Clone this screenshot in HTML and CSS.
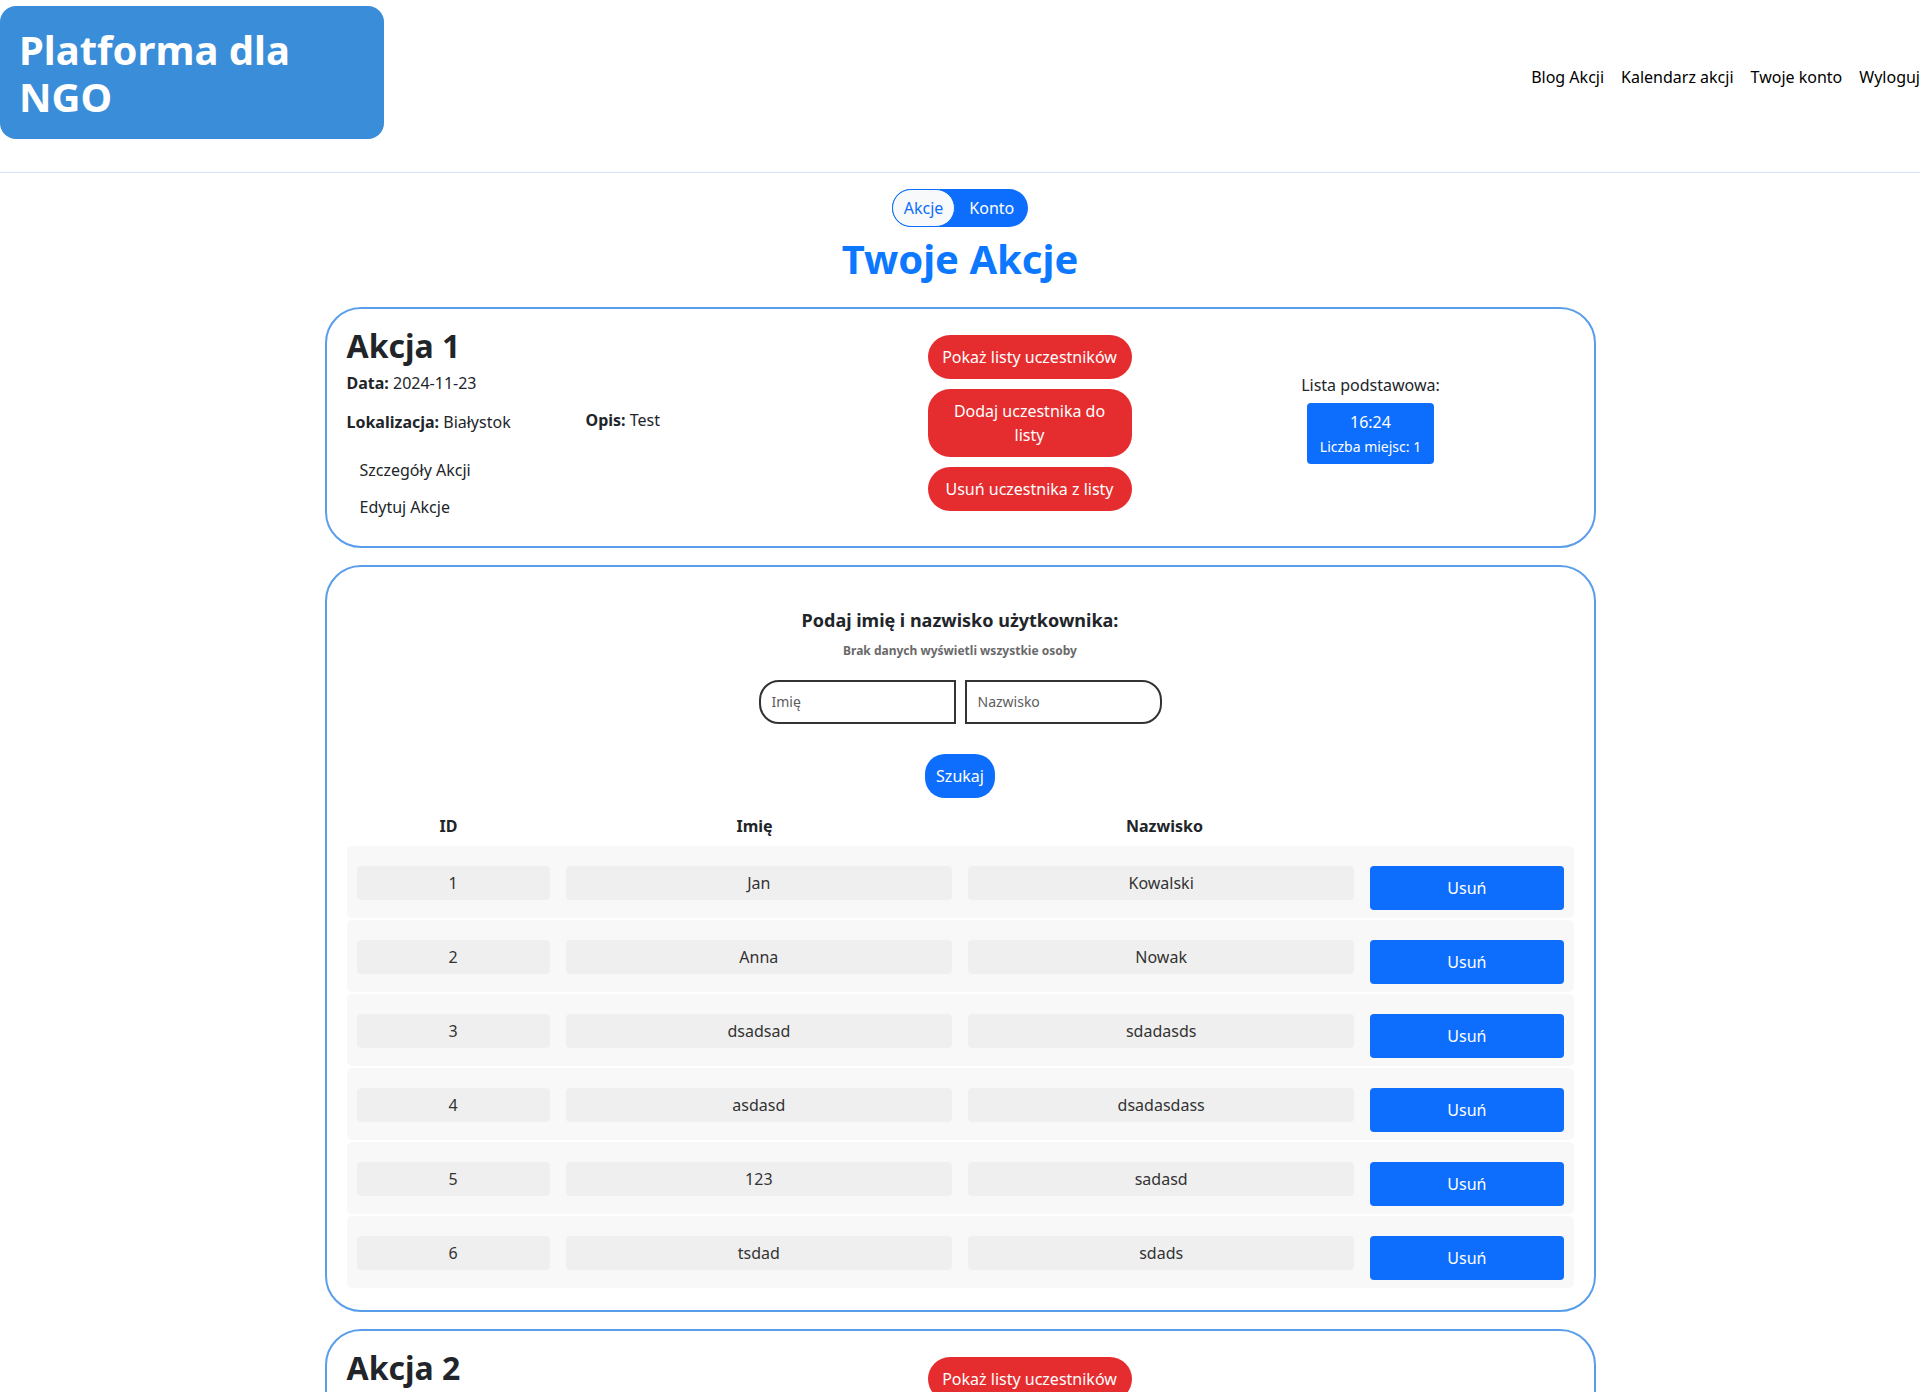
FILE: index.html
```html
<!DOCTYPE html>
<html lang="pl">

<head>
    <meta charset="UTF-8">
    <meta name="viewport" content="width=device-width, initial-scale=1.0">
    <title>Platforma dla NGO - Twoje Akcje</title>
    <link rel="stylesheet" href="styles.css">
</head>

<body>
    <header class="topbar">
        <div class="logo">Platforma dla NGO</div>
        <nav class="menu">
            <a href="#">Blog Akcji</a>
            <a href="#">Kalendarz akcji</a>
            <a href="#">Twoje konto</a>
            <a href="#">Wyloguj</a>
        </nav>
    </header>

    <main class="page">
        <div class="switch">
            <a href="#" class="switch-item active">Akcje</a>
            <a href="#" class="switch-item">Konto</a>
        </div>
        <h1 class="page-title">Twoje Akcje</h1>

        <!-- Akcja 1 -->
        <section class="card action">
            <div class="action-info">
                <h2>Akcja 1</h2>
                <p class="info-line"><b>Data:</b> 2024-11-23</p>
                <div class="info-row">
                    <p class="info-line"><b>Lokalizacja:</b> Białystok</p>
                    <p class="info-line opis"><b>Opis:</b> Test</p>
                </div>
                <div class="action-links">
                    <a href="#">Szczegóły Akcji</a>
                    <a href="#">Edytuj Akcje</a>
                </div>
            </div>
            <div class="action-buttons">
                <button class="btn-red">Pokaż listy uczestników</button>
                <button class="btn-red">Dodaj uczestnika do listy</button>
                <button class="btn-red">Usuń uczestnika z listy</button>
            </div>
            <div class="action-lists">
                <p>Lista podstawowa:</p>
                <div class="slot">
                    <span class="slot-time">16:24</span>
                    <span class="slot-places">Liczba miejsc: 1</span>
                </div>
            </div>
        </section>

        <!-- Wyszukiwanie uczestnikow -->
        <section class="card search">
            <div class="search-form">
                <h3>Podaj imię i nazwisko użytkownika:</h3>
                <p class="search-hint">Brak danych wyświetli wszystkie osoby</p>
                <div class="search-inputs">
                    <input type="text" class="input-left" placeholder="Imię">
                    <input type="text" class="input-right" placeholder="Nazwisko">
                </div>
                <button class="btn-blue">Szukaj</button>
            </div>

            <div class="people">
                <div class="people-head">
                    <span>ID</span>
                    <span>Imię</span>
                    <span>Nazwisko</span>
                    <span></span>
                </div>
                <div id="lista-osob"></div>
            </div>
        </section>

        <!-- Akcja 2 -->
        <section class="card action">
            <div class="action-info">
                <h2>Akcja 2</h2>
                <p class="info-line"><b>Data:</b> 2024-12-07</p>
                <div class="info-row">
                    <p class="info-line"><b>Lokalizacja:</b> Białystok</p>
                    <p class="info-line opis"><b>Opis:</b> Test</p>
                </div>
                <div class="action-links">
                    <a href="#">Szczegóły Akcji</a>
                    <a href="#">Edytuj Akcje</a>
                </div>
            </div>
            <div class="action-buttons">
                <button class="btn-red">Pokaż listy uczestników</button>
                <button class="btn-red">Dodaj uczestnika do listy</button>
                <button class="btn-red">Usuń uczestnika z listy</button>
            </div>
            <div class="action-lists">
                <p>Lista podstawowa:</p>
                <div class="slot">
                    <span class="slot-time">10:00</span>
                    <span class="slot-places">Liczba miejsc: 5</span>
                </div>
            </div>
        </section>
    </main>

    <script>
        const osoby = [
            { id: 1, imie: "Jan", nazwisko: "Kowalski" },
            { id: 2, imie: "Anna", nazwisko: "Nowak" },
            { id: 3, imie: "dsadsad", nazwisko: "sdadasds" },
            { id: 4, imie: "asdasd", nazwisko: "dsadasdass" },
            { id: 5, imie: "123", nazwisko: "sadasd" },
            { id: 6, imie: "tsdad", nazwisko: "sdads" }
        ];

        function wypiszOsoby() {
            const lista = document.getElementById('lista-osob');
            lista.innerHTML = '';

            osoby.forEach(osoba => {
                const wiersz = document.createElement('div');
                wiersz.className = 'person-row';
                wiersz.innerHTML = `
                    <span class="cell">${osoba.id}</span>
                    <span class="cell">${osoba.imie}</span>
                    <span class="cell">${osoba.nazwisko}</span>
                    <button class="btn-remove">Usuń</button>
                `;
                lista.appendChild(wiersz);
            });
        }

        wypiszOsoby();
    </script>
</body>

</html>
```

FILE: styles.css
```css
body {
    margin: 0;
    padding: 0;
    font-family: 'Noto Sans', 'Open Sans', sans-serif;
    font-size: 16px;
    line-height: 24px;
    color: #212529;
    background-color: #fff;
}

a {
    color: inherit;
    text-decoration: none;
}

p {
    margin: 0;
}

/* naglowek */

.topbar {
    display: flex;
    justify-content: space-between;
    align-items: flex-start;
    padding-bottom: 33px;
    border-bottom: 1px solid #d0e3f6;
}

.logo {
    width: 20%;
    box-sizing: border-box;
    margin-top: 6px;
    padding: 20px 19px 19px;
    background-color: #3a8dd9;
    border-radius: 16px;
    color: #fff;
    font-size: 40px;
    line-height: 47px;
    font-weight: 700;
}

.menu {
    display: flex;
    gap: 17px;
    margin-top: 65px;
}

.menu a {
    color: #000;
}

/* strona */

.page {
    padding-top: 16px;
}

.switch {
    display: flex;
    width: max-content;
    margin: 0 auto;
    background-color: #0d6efd;
    border-radius: 20px;
}

.switch-item {
    padding: 7px 14px;
    color: #fff;
    border-radius: 20px;
}

.switch-item.active {
    padding: 6px 11px;
    background-color: #f8f9fa;
    border: 1px solid #0d6efd;
    color: #0d6efd;
}

.page-title {
    margin: 8px 0 24px;
    text-align: center;
    font-size: 40px;
    line-height: 1.2;
    font-weight: 700;
    color: #0b78ff;
}

.card {
    width: 1271px;
    box-sizing: border-box;
    margin: 0 auto 17px;
    border: 2px solid #5a9eeb;
    border-radius: 36px;
}

/* karta akcji */

.action {
    display: grid;
    grid-template-columns: 581px 204px 1fr;
    padding: 18px 20px 20px;
}

.action h2 {
    margin: 0 0 6px;
    font-size: 32px;
    line-height: 1.2;
    font-weight: 700;
}

.info-row {
    display: grid;
    grid-template-columns: 239px auto;
    align-items: start;
    margin-top: 15px;
}

.opis {
    margin-top: -2px;
}

.action-links {
    margin-top: 18px;
}

.action-links a {
    display: block;
    width: max-content;
    padding: 6px 13px 7px;
}

.action-buttons {
    display: flex;
    flex-direction: column;
    gap: 10px;
    padding-top: 8px;
}

.btn-red {
    padding: 10px 14px;
    border: none;
    border-radius: 22px;
    background-color: #e52d2f;
    color: #fff;
    font-family: inherit;
    font-size: 16px;
    line-height: 24px;
    cursor: pointer;
}

.action-lists {
    display: flex;
    flex-direction: column;
    align-items: center;
    padding: 46px 0 0 36px;
}

.action-lists p {
    margin-bottom: 6px;
}

.slot {
    display: flex;
    flex-direction: column;
    align-items: center;
    gap: 2px;
    padding: 7px 13px;
    background-color: #0d6efd;
    border-radius: 4px;
    color: #fff;
}

.slot-places {
    font-size: 14px;
    line-height: 21px;
}

/* wyszukiwanie */

.search {
    padding: 18px 20px 22px;
}

.search-form {
    display: flex;
    flex-direction: column;
    align-items: center;
    padding-top: 25px;
}

.search-form h3 {
    margin: 0 0 10px;
    font-size: 18px;
    line-height: 1.2;
    font-weight: 700;
}

.search-hint {
    font-size: 12px;
    line-height: 18px;
    font-weight: 700;
    color: #6a6a6a;
}

.search-inputs {
    display: flex;
    gap: 9px;
    margin-top: 20px;
}

.search-inputs input {
    width: 197px;
    height: 44px;
    box-sizing: border-box;
    padding: 0 11px;
    border: 2px solid #333;
    font-family: inherit;
    font-size: 14px;
    color: #212529;
    outline: none;
}

.search-inputs input::placeholder {
    color: #5c5c5c;
    opacity: 1;
}

.input-left {
    border-radius: 20px 0 0 20px;
}

.input-right {
    border-radius: 0 20px 20px 0;
}

.btn-blue {
    margin-top: 30px;
    padding: 10px 11px;
    border: none;
    border-radius: 20px;
    background-color: #0d6efd;
    color: #fff;
    font-family: inherit;
    font-size: 16px;
    line-height: 24px;
    cursor: pointer;
}

/* tabela osob */

.people {
    margin-top: 16px;
}

.people-head {
    display: grid;
    grid-template-columns: 204px 408px 412px 1fr;
    margin-bottom: 8px;
    font-weight: 700;
    text-align: center;
}

.person-row {
    display: grid;
    grid-template-columns: 1fr 2fr 2fr 1fr;
    gap: 16px;
    align-items: start;
    padding: 20px 10px 8px;
    margin-bottom: 2px;
    background-color: #f8f8f8;
    border-radius: 5px;
    text-align: center;
}

.person-row:last-child {
    margin-bottom: 0;
}

.cell {
    padding: 5px 0;
    background-color: #efefef;
    border-radius: 4px;
    color: #333;
}

.btn-remove {
    padding: 10px;
    border: none;
    border-radius: 4px;
    background-color: #0d6efd;
    color: #fff;
    font-family: inherit;
    font-size: 16px;
    line-height: 24px;
    cursor: pointer;
}
```
